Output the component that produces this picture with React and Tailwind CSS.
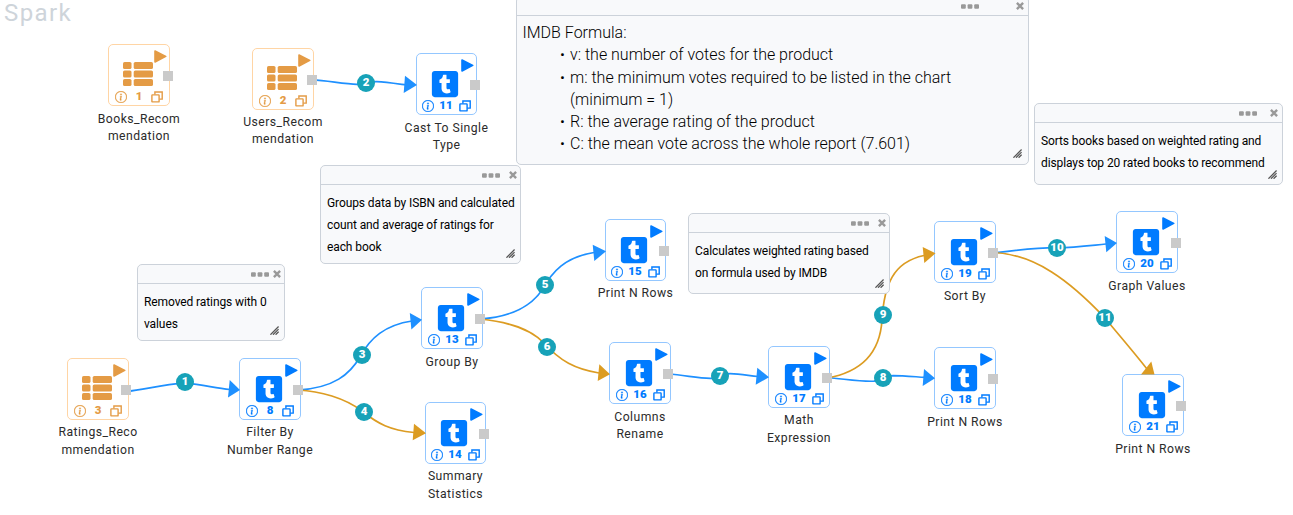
import React from "react";
import { FaTumblrSquare } from "react-icons/fa";
import { BsInfoCircle } from "react-icons/bs";

const BLUE = "#1e90ff";
const GOLD = "#dc9c22";

// w: box width, ly: first label line offset from the box top, lh: label line height
const NODES = [
  { id: 1, x: 108, y: 44, w: 62, port: 55, ly: 67, lh: 17, data: true, label: ["Books_Recom", "mendation"] },
  { id: 2, x: 252, y: 48, w: 62, port: 55, ly: 66, lh: 17, data: true, label: ["Users_Recom", "mendation"] },
  { id: 3, x: 67, y: 358, w: 62, port: 54, ly: 65, lh: 18, data: true, label: ["Ratings_Reco", "mmendation"] },
  { id: 8, x: 239, y: 358, w: 62, port: 54, ly: 65, lh: 18, label: ["Filter By", "Number Range"] },
  { id: 11, x: 416, y: 53, w: 61, port: 54, ly: 67, lh: 17, label: ["Cast To Single", "Type"] },
  { id: 13, x: 421, y: 287, w: 62, port: 54, ly: 67, lh: 17, label: ["Group By"] },
  { id: 14, x: 425, y: 402, w: 61, port: 54, ly: 65, lh: 18, label: ["Summary", "Statistics"] },
  { id: 15, x: 605, y: 219, w: 61, port: 54, ly: 66, lh: 17, label: ["Print N Rows"] },
  { id: 16, x: 609, y: 342, w: 62, port: 54, ly: 67, lh: 17, label: ["Columns", "Rename"] },
  { id: 17, x: 768, y: 346, w: 62, port: 54, ly: 65, lh: 18, label: ["Math", "Expression"] },
  { id: 18, x: 934, y: 347, w: 62, port: 54, ly: 67, lh: 17, label: ["Print N Rows"] },
  { id: 19, x: 934, y: 221, w: 62, port: 54, ly: 67, lh: 17, label: ["Sort By"] },
  { id: 20, x: 1116, y: 211, w: 62, port: 55, ly: 67, lh: 17, label: ["Graph Values"] },
  { id: 21, x: 1122, y: 374, w: 62, port: 54, ly: 67, lh: 17, label: ["Print N Rows"] },
];

const EDGES = [
  { id: 1, c: BLUE, x: 185, y: 382, d: "M126 391.5 C145 389.5 160 385 185 382.8 C205 385 215 388 230 389.5", a: "229.7,380 228,397.5 240,390" },
  { id: 2, c: BLUE, x: 366, y: 83, d: "M312 79.7 C330 81 345 84.3 357 84.3 C365 83.5 370 81.5 377 81.7 C385 82 395 83.5 406 85", a: "405,75.7 403.7,93 417,85" },
  { id: 3, c: BLUE, x: 362, y: 355, d: "M298 390 C334 388 350 374 360 357 C370 338 385 325 412 321", a: "409.8,313 411.4,329.5 422,319.7" },
  { id: 4, c: GOLD, x: 364, y: 412, d: "M298 390 C320 391 345 398 362 411 C378 424 390 430 414 432.5", a: "414,423.7 412.7,440.3 426,433.3" },
  { id: 5, c: BLUE, x: 545, y: 285, d: "M480 319 C512 317 532 305 542 290 C552 272 565 257 594 252.5", a: "592.7,244.7 594.3,261 606,251.3" },
  { id: 6, c: GOLD, x: 547, y: 347, d: "M480 319 C510 322 530 329 544 343 C560 361 575 369 599 373", a: "599.3,364.3 597.7,381 610,374.3" },
  { id: 7, c: BLUE, x: 720, y: 376, d: "M668 374 C685 375 698 378.5 711 378.3 C718 378 724 373.8 730 373.7 C740 373.7 748 375.5 758 376.5", a: "757.3,367.7 755.7,384.7 769,377.3" },
  { id: 8, c: BLUE, x: 883, y: 378, d: "M827 377.5 C845 379 860 381.8 874 381.2 C882 380 886 375.8 893 375.6 C903 375.6 913 376.6 925 377.4", a: "924,369 922.7,386 935,378.3" },
  { id: 9, c: GOLD, x: 883, y: 315, d: "M827 378 C862 372 880 352 882 320 C884 285 893 262 924 255.5", a: "922.7,247 924.3,263 935.5,253.3" },
  { id: 10, c: BLUE, x: 1057, y: 248, d: "M993 253 C1010 251 1030 248 1057 247.7 C1075 247.5 1090 245.5 1106 244", a: "1104.7,236 1106.3,252.3 1117,243" },
  { id: 11, c: GOLD, x: 1105, y: 318, d: "M993 252.5 C1035 254 1070 281 1105 318 C1118 334 1132 350 1147 369", a: "1151.3,361.5 1154.5,374.5 1141,374.5" },
];

const NOTES = [
  { x: 320, y: 165, w: 201, h: 99, gap: 9, pad: 3, text: ["Groups data by ISBN and calculated", "count and average of ratings for", "each book"] },
  { x: 137, y: 264, w: 148, h: 77, gap: 4, pad: 3, text: ["Removed ratings with 0", "values"] },
  { x: 688, y: 213, w: 202, h: 81, gap: 9, pad: 3, text: ["Calculates weighted rating based", "on formula used by IMDB"] },
  { x: 1034, y: 103, w: 249, h: 82, gap: 13, pad: 4, text: ["Sorts books based on weighted rating and", "displays top 20 rated books to recommend"] },
];

const ListIcon = () => (
  <svg className="ml-[8px]" width="30" height="24" viewBox="0 0 30 24" fill="currentColor">
    {[0, 8.5, 17].map((y) => (
      <g key={y}>
        <rect x="0" y={y} width="8.5" height="7" rx="1.6" />
        <rect x="10.7" y={y} width="19.3" height="7" rx="1.6" />
      </g>
    ))}
  </svg>
);

const CopyIcon = () => (
  <svg width="12" height="12" viewBox="0 0 12 12" fill="none" stroke="currentColor" strokeWidth="1.4">
    <rect x="0.9" y="3.9" width="7.2" height="7" rx="0.5" />
    <path d="M3.9 3.6 V1 H11.2 V8.1 H8.3" />
  </svg>
);

const PlayIcon = () => (
  <svg width="13" height="13" viewBox="0 0 13 13" fill="currentColor" stroke="currentColor" strokeWidth="1.6" strokeLinejoin="round">
    <path d="M1 1 L11.7 6.4 L1 12 Z" />
  </svg>
);

const ResizeIcon = () => (
  <svg width="9" height="9" viewBox="0 0 9 9" fill="none" stroke="#555" strokeWidth="1.3">
    <path d="M0.4 8.7 L8.6 0.5 M3 8.7 L8.6 3.1 M5.6 8.7 L8.6 5.7" />
  </svg>
);

function Node({ n }) {
  return (
    <div className="absolute flex flex-col" style={{ left: n.x, top: n.y, width: n.w }}>
      <div
        className={
          "relative flex h-[62px] flex-col rounded-[5px] border bg-white pt-[17px] " +
          (n.w === 61 ? "pl-[5px] " : "pl-[6px] ") +
          (n.data ? "border-[#ffd5a5] text-[#e49b45]" : "border-[#94c7ff] text-[#007bff]")
        }
      >
        <div className="flex h-[27px]">
          {n.data ? <ListIcon /> : <FaTumblrSquare className="-mt-[2px] ml-[8px] size-[30px] shrink-0" />}
        </div>
        <div className="mt-[2px] -ml-[0.5px] flex h-[11px] w-[49px] items-center justify-between">
          <BsInfoCircle className="size-[12px]" stroke="currentColor" strokeWidth="0.4" />
          <span className="text-[11.5px] leading-[11px] font-black">{n.id}</span>
          <CopyIcon />
        </div>
        <div className="absolute top-[5px] right-[2px]"><PlayIcon /></div>
      </div>
      <div
        className="flex flex-col items-center text-[12.2px] tracking-[0.45px] whitespace-nowrap text-[#2b2b2b]"
        style={{ marginTop: n.ly - 62, lineHeight: n.lh + "px" }}
      >
        {n.label.map((t) => <span key={t}>{t}</span>)}
      </div>
    </div>
  );
}

function NoteHeader({ gap, pad }) {
  return (
    <div
      className="flex h-[19px] shrink-0 items-center justify-end border-b border-[#ccd2da]"
      style={{ paddingRight: pad }}
    >
      <svg width="18" height="5" viewBox="0 0 18 5" fill="#999">
        <rect x="0" y="0.3" width="4.8" height="4.5" rx="1" />
        <rect x="6.6" y="0.3" width="4.8" height="4.5" rx="1" />
        <rect x="13.2" y="0.3" width="4.8" height="4.5" rx="1" />
      </svg>
      <svg width="8" height="8" viewBox="0 0 8 8" stroke="#999" strokeWidth="2.4" style={{ marginLeft: gap }}>
        <path d="M0.9 0.9 L7.1 7.1 M7.1 0.9 L0.9 7.1" />
      </svg>
    </div>
  );
}

function Note({ n }) {
  return (
    <div
      className="absolute flex flex-col rounded-[5px] border border-[#ccd2da] bg-[#f8f9fb]"
      style={{ left: n.x, top: n.y, width: n.w, height: n.h }}
    >
      <NoteHeader gap={n.gap} pad={n.pad} />
      <div className="flex flex-col px-[6px] pt-[7px] text-[12px] leading-[22px] tracking-[-0.1px] whitespace-nowrap text-black">
        {n.text.map((t) => <span key={t}>{t}</span>)}
      </div>
      <div className="absolute right-[5px] bottom-[5px]"><ResizeIcon /></div>
    </div>
  );
}

const Bullet = ({ children }) => (
  <li className="flex">
    <span className="w-[10px] shrink-0 text-[15px]">•</span>
    <span>{children}</span>
  </li>
);

export default function App() {
  return (
    <main className="relative h-[515px] w-[1293px] overflow-hidden bg-white font-[Roboto,sans-serif]">
      <h1 className="pl-[4px] text-[24px] leading-[26px] tracking-[1.4px] text-[#ced4da]">Spark</h1>

      {NODES.map((n) => <Node key={n.id} n={n} />)}

      <svg className="absolute inset-0" width="1293" height="515">
        {EDGES.map((e) => (
          <g key={e.id}>
            <path d={e.d} fill="none" stroke={e.c} strokeWidth="1.7" />
            <polygon points={e.a} fill={e.c} />
          </g>
        ))}
      </svg>

      {NODES.map((n) => (
        <div key={n.id} className="absolute size-[10px] bg-[#cacaca]" style={{ left: n.x + n.port, top: n.y + 27 }} />
      ))}

      {EDGES.map((e) => (
        <div
          key={e.id}
          className="absolute flex size-[18px] items-center justify-center rounded-full bg-[#17a2b8] text-[11.5px] leading-none font-black text-white"
          style={{ left: e.x - 9, top: e.y - 9 }}
        >
          {e.id}
        </div>
      ))}

      {NOTES.map((n) => <Note key={n.x} n={n} />)}

      <div className="absolute -top-[4px] left-[516px] flex h-[169px] w-[513px] flex-col rounded-[5px] border border-[#ccd2da] bg-[#f8f9fb]">
        <NoteHeader gap={37} pad={4} />
        <div className="pt-[6px] pl-[6px] text-[16px] leading-[22.3px] font-light whitespace-nowrap text-black">
          <p className="-ml-[0.5px]">IMDB Formula:</p>
          <ul className="pl-[37px]">
            <Bullet>v: the number of votes for the product</Bullet>
            <Bullet>m: the minimum votes required to be listed in the chart<br />(minimum = 1)</Bullet>
            <Bullet>R: the average rating of the product</Bullet>
            <Bullet>C: the mean vote across the whole report (7.601)</Bullet>
          </ul>
        </div>
        <div className="absolute right-[6px] bottom-[6px]"><ResizeIcon /></div>
      </div>
    </main>
  );
}
